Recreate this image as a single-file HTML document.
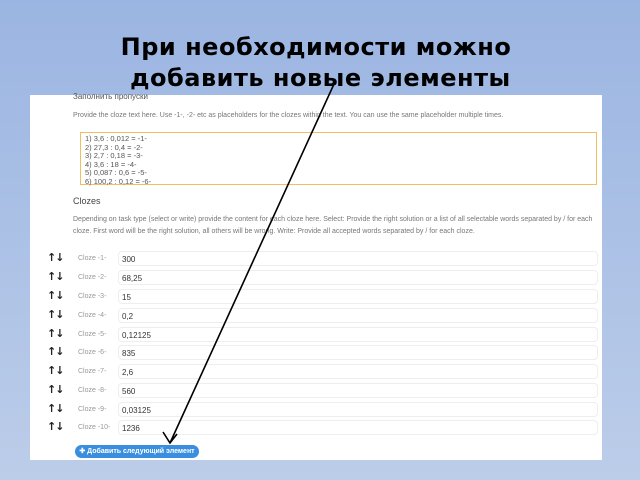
<!DOCTYPE html><html><head><style>
body{margin:0;width:640px;height:480px;overflow:hidden;background:linear-gradient(#9bb5e2,#bccde9);font-family:"Liberation Sans",sans-serif;position:relative}
.t{position:absolute;left:0;width:632px;text-align:center;font-family:"DejaVu Sans",sans-serif;font-weight:bold;font-size:24px;color:#000;line-height:31px;top:32px;letter-spacing:0.5px}
.p{position:absolute;left:30px;top:95px;width:572px;height:365px;background:#fff}
.s{position:absolute;font-size:7px;color:#777;white-space:nowrap}
.ta{position:absolute;left:80px;top:132px;width:517px;height:53px;border:1px solid #f0c060;font-size:7.5px;line-height:8.5px;color:#555;padding:2px 4px;box-sizing:border-box}
.r{position:absolute;left:0;width:572px;height:18px}
.r .a{position:absolute;left:17px;top:1px;font-size:11px;color:#222;font-weight:bold;letter-spacing:-1px;font-family:"DejaVu Sans",sans-serif}
.r .l{position:absolute;left:48px;top:5px;font-size:7px;color:#999}
.r .i{position:absolute;left:88px;top:1px;width:480px;height:15px;border:1px solid #eee;border-radius:4px;box-sizing:border-box;font-size:8px;color:#333;padding:3px 3px}
.b{position:absolute;left:75px;top:445px;width:124px;height:13px;border-radius:7px;background:#3a8ee0;color:#fff;font-size:7px;font-weight:bold;line-height:13px;text-align:center}
</style></head><body>
<div class="p">
<div class="s" style="left:43px;top:-3px;font-size:8px;color:#555">Заполнить пропуски</div>
<div class="s" style="left:43px;top:17px">Provide the cloze text here. Use -1-, -2- etc as placeholders for the clozes within the text. You can use the same placeholder multiple times.</div>
<div class="s" style="left:43px;top:101px;font-size:9px;color:#444">Clozes</div>
<div class="s" style="left:43px;top:121px">Depending on task type (select or write) provide the content for each cloze here. Select: Provide the right solution or a list of all selectable words separated by / for each</div>
<div class="s" style="left:43px;top:133px">cloze. First word will be the right solution, all others will be wrong. Write: Provide all accepted words separated by / for each cloze.</div>
</div>
<div class="ta">1) 3,6 : 0,012 = -1-<br>2) 27,3 : 0,4 = -2-<br>3) 2,7 : 0,18 = -3-<br>4) 3,6 : 18 = -4-<br>5) 0,087 : 0,6 = -5-<br>6) 100,2 : 0,12 = -6-</div>
<div style="position:absolute;left:30px;top:250px">
<div class="r" style="top:0"><span class="a">↑↓</span><span class="l">Cloze -1-</span><div class="i">300</div></div>
<div class="r" style="top:19px"><span class="a">↑↓</span><span class="l">Cloze -2-</span><div class="i">68,25</div></div>
<div class="r" style="top:38px"><span class="a">↑↓</span><span class="l">Cloze -3-</span><div class="i">15</div></div>
<div class="r" style="top:57px"><span class="a">↑↓</span><span class="l">Cloze -4-</span><div class="i">0,2</div></div>
<div class="r" style="top:76px"><span class="a">↑↓</span><span class="l">Cloze -5-</span><div class="i">0,12125</div></div>
<div class="r" style="top:94px"><span class="a">↑↓</span><span class="l">Cloze -6-</span><div class="i">835</div></div>
<div class="r" style="top:113px"><span class="a">↑↓</span><span class="l">Cloze -7-</span><div class="i">2,6</div></div>
<div class="r" style="top:132px"><span class="a">↑↓</span><span class="l">Cloze -8-</span><div class="i">560</div></div>
<div class="r" style="top:151px"><span class="a">↑↓</span><span class="l">Cloze -9-</span><div class="i">0,03125</div></div>
<div class="r" style="top:169px"><span class="a">↑↓</span><span class="l">Cloze -10-</span><div class="i">1236</div></div>
</div>
<div class="b">✚ Добавить следующий элемент</div>
<div class="t">При необходимости можно<br>&nbsp;добавить новые элементы</div>
<svg style="position:absolute;left:0;top:0" width="640" height="480"><path d="M334 84 L170 443 M163 432 L170 443 L177 434" stroke="#000" stroke-width="1.6" fill="none"/></svg>
</body></html>
